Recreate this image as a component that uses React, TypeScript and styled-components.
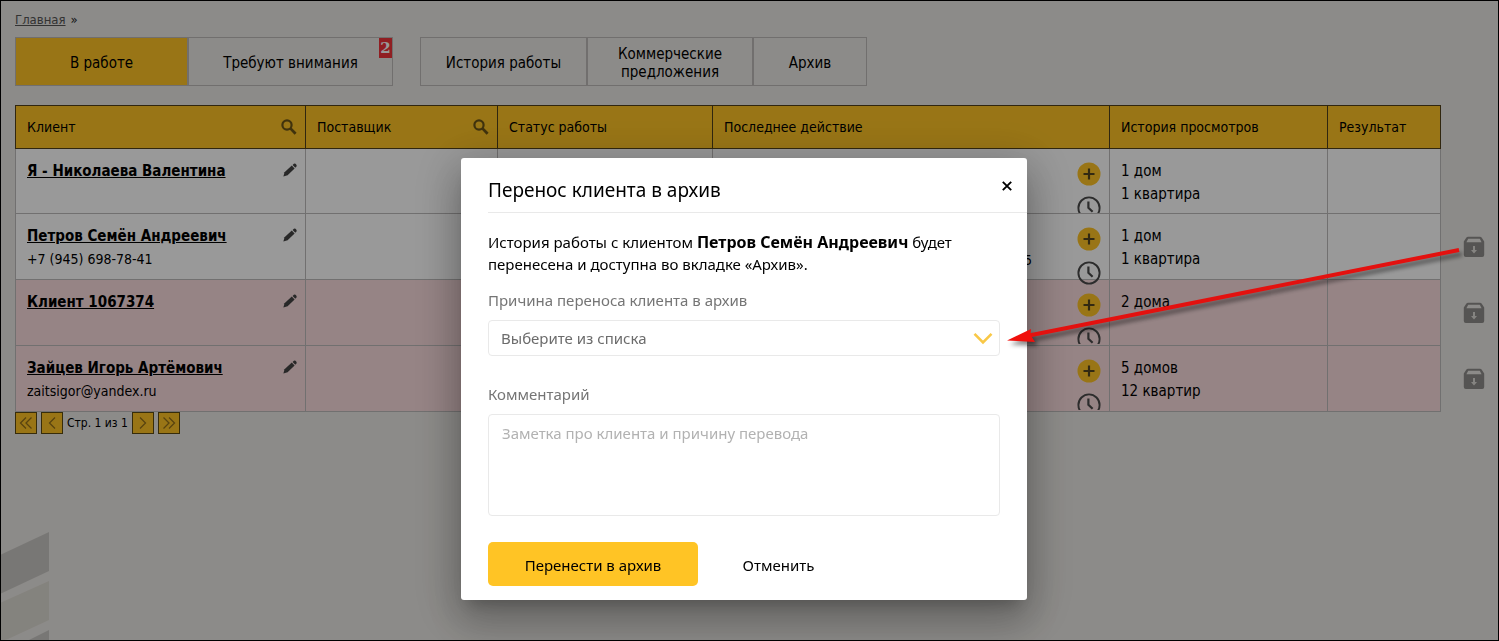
import React from "react";
import styled, { createGlobalStyle, css } from "styled-components";

const uiFont = `"DejaVu Sans Condensed", Tahoma, Verdana, sans-serif`;
const dialogFont = `"Noto Sans", Tahoma, sans-serif`;

const GlobalStyle = createGlobalStyle`
  *, *::before, *::after { box-sizing: border-box; }
  body { margin: 0; font-family: ${uiFont}; font-size: 15px; line-height: 18px; color: #000; }
  button, select, textarea { font: inherit; color: inherit; margin: 0; }
  h1, p { margin: 0; }
`;

const Page = styled.main`
  position: relative;
  min-height: 100vh;
  padding: 9px 0 0 15px;
  background: #eae8e4;
  overflow: hidden;
`;

const Frame = styled.div`
  position: fixed;
  inset: 0;
  border: 1px solid #000;
  pointer-events: none;
  z-index: 3;
`;

const Breadcrumbs = styled.nav`
  display: flex;
  gap: 5px;
  padding-top: 2px;
  font-size: 13px;
  line-height: 18px;
  color: #222;
  a { color: #555; }
`;

const Tabs = styled.nav`
  display: flex;
  gap: 27px;
  padding: 8px 0 19px;
`;

const TabGroup = styled.div`
  display: flex;
  border: 1px solid #bcbab7;
`;

const Tab = styled.button<{ $width: number; $active?: boolean }>`
  position: relative;
  width: ${(p) => p.$width}px;
  height: 47px;
  padding: 2px 16px 0;
  border: 0;
  background: ${(p) => (p.$active ? "#ffc425" : "transparent")};
  & + & { border-left: 2px solid #bcbab7; }
`;

const Badge = styled.span`
  position: absolute;
  top: 0;
  right: 0;
  width: 13px;
  height: 20px;
  background: #f0333a;
  color: #fff;
  font-family: "DejaVu Serif", serif;
  font-weight: 700;
  line-height: 20px;
`;

const Table = styled.table`
  width: 100%;
  table-layout: fixed;
  border-collapse: collapse;
`;

const HeadCell = styled.th<{ $width: number }>`
  width: ${(p) => p.$width}px;
  height: 43px;
  padding: 0 8px 0 11px;
  border: 1px solid #50401a;
  background: #ffc425;
  font-size: 14px;
  font-weight: 400;
  text-align: left;
`;

const HeadContent = styled.div`
  display: flex;
  align-items: center;
  justify-content: space-between;
`;

const ActionHead = styled.th`
  width: auto;
`;

const Cell = styled.td`
  padding: 0 8px 0 11px;
  border: 1px solid #bdbbbb;
  vertical-align: top;
`;

const ActionCell = styled.td`
  padding: 6px 0 0 8px;
  text-align: center;
  vertical-align: middle;
`;

const Row = styled.tr<{ $alert?: boolean }>`
  height: 66px;
  &:first-child { height: 65px; }
  ${Cell} { background: ${(p) => (p.$alert ? "#fadcde" : "#fff")}; }
`;

const ClientBox = styled.div`
  display: flex;
  justify-content: space-between;
  padding-top: 11px;
  line-height: 23px;
`;

const ClientLink = styled.a`
  display: block;
  color: #000;
  font-weight: 700;
`;

const Contact = styled.div`
  font-size: 14px;
`;

const IconButton = styled.button`
  display: inline-flex;
  align-items: center;
  justify-content: center;
  flex: none;
  height: 20px;
  padding: 0;
  border: 0;
  background: none;
`;

const LastAction = styled.div<{ $filled: boolean }>`
  display: flex;
  justify-content: flex-end;
  gap: 45px;
  height: 64px;
  overflow: ${(p) => (p.$filled ? "visible" : "hidden")};
`;

const ActionText = styled.div`
  padding-top: 37px;
  font-size: 14px;
`;

const Stack = styled.div`
  display: flex;
  flex-direction: column;
  gap: 10px;
  padding-top: 13px;
  ${IconButton} { height: 24px; }
`;

const Views = styled.div`
  padding-top: 11px;
  line-height: 23px;
`;

const Pager = styled.nav`
  display: flex;
  align-items: center;
  gap: 4px;
  font-size: 12px;
`;

const PageButton = styled.button`
  display: flex;
  align-items: center;
  justify-content: center;
  width: 22px;
  height: 22px;
  padding: 0;
  border: 1px solid #5c4a12;
  background: #ffc425;
`;

const Stripes = styled.svg`
  position: absolute;
  left: 0;
  bottom: 0;
`;

const Backdrop = styled.div`
  position: fixed;
  inset: 0;
  z-index: 1;
  display: flex;
  align-items: flex-start;
  justify-content: center;
  padding: 158px 11px 0 0;
  background: rgba(0, 0, 0, 0.4);
  font-family: ${dialogFont};
`;

const Dialog = styled.form`
  position: relative;
  width: 566px;
  padding: 16px 27px 14px;
  border-radius: 3px;
  background: #fff;
  box-shadow: 0 11px 15px -7px rgba(0, 0, 0, 0.2), 0 24px 38px 3px rgba(0, 0, 0, 0.14),
    0 9px 46px 8px rgba(0, 0, 0, 0.2);
`;

const DialogHead = styled.header`
  display: flex;
  justify-content: space-between;
  margin-right: -27px;
  padding-right: 14px;
  height: 39px;
  border-bottom: 1px solid #e9e9e9;
`;

const Title = styled.h1`
  font-size: 19px;
  font-weight: 400;
  line-height: 32px;
`;

const CloseButton = styled(IconButton)`
  height: 24px;
`;

const Message = styled.p`
  padding: 18px 0 15px;
  line-height: 22px;
  b { font-size: 16px; }
`;

const Label = styled.label`
  display: block;
  height: 30px;
  line-height: 20px;
  color: #757575;
`;

const fieldStyle = css`
  display: block;
  width: 100%;
  border: 1px solid #e9e9e9;
  border-radius: 4px;
  background: #fff;
  outline: 0;
`;

const SelectBox = styled.div`
  position: relative;
  padding-bottom: 28px;
  svg { position: absolute; top: 12px; right: 7px; pointer-events: none; }
`;

const Select = styled.select`
  ${fieldStyle}
  height: 36px;
  padding: 0 12px;
  appearance: none;
  color: #6c6c6c;
`;

const TextArea = styled.textarea`
  ${fieldStyle}
  height: 102px;
  padding: 8px 13px;
  line-height: 20px;
  resize: none;
  &::placeholder { color: #b2b2b2; opacity: 1; }
`;

const Actions = styled.footer`
  display: flex;
  gap: 16px;
  padding-top: 26px;
`;

const DialogButton = styled.button<{ $primary?: boolean }>`
  width: ${(p) => (p.$primary ? 210 : 129)}px;
  height: 44px;
  padding: 2px 0 0;
  border: 0;
  border-radius: 5px;
  background: ${(p) => (p.$primary ? "#ffc425" : "none")};
`;

const Pointer = styled.svg`
  position: absolute;
  left: 540px;
  top: 80px;
  overflow: visible;
  pointer-events: none;
  filter: drop-shadow(3px 4px 2px rgba(0, 0, 0, 0.45));
`;

const SearchIcon = () => (
  <svg width="16" height="16" viewBox="0 0 16 16" fill="none" stroke="#6b5416">
    <circle cx="6" cy="6" r="4.6" strokeWidth="2.2" />
    <path d="M9.4 9.4 14.6 14.8" strokeWidth="2.8" />
  </svg>
);

const PencilIcon = () => (
  <svg width="14" height="14" viewBox="0 0 14 14" fill="#444">
    <path d="M.4 13.6 1.5 9.3 8.8 2.6 11.6 5.6 4.6 12.3Z" />
    <path d="M9.6 1.9 10.9.7Q11.7.1 12.5.8L13.4 1.8Q14 2.6 13.4 3.4L12.3 4.8Z" />
  </svg>
);

const PlusIcon = () => (
  <svg width="24" height="24" viewBox="0 0 24 24">
    <circle cx="12" cy="12" r="11.5" fill="#ffc425" />
    <path d="M12 6.500v11M6.500 12h11" stroke="#54451f" strokeWidth="2.2" />
  </svg>
);

const ClockIcon = () => (
  <svg width="24" height="24" viewBox="0 0 24 24" fill="none" stroke="#4a4a4a">
    <circle cx="12" cy="12" r="10.6" strokeWidth="1.9" />
    <path d="M11.4 5.5v6.2l4.2 4" strokeWidth="2.2" />
  </svg>
);

const ArchiveIcon = () => (
  <svg width="22" height="22" viewBox="0 0 22 22">
    <path
      fill="#8e8c8a"
      fillRule="evenodd"
      d="M5 .8h12Q18 .8 18.600 1.600L21.200 5.500V19q0 2-2 2H2.800q-2 0-2-2V5.500L3.400 1.600Q4 .8 5 .8ZM5.200 2.800 3.400 6.200h15.200L16.800 2.800Z"
    />
    <path fill="#dedcd8" d="M10 10h2v4h2L11 17.600 8 14H10Z" />
  </svg>
);

const CloseIcon = () => (
  <svg width="12" height="12" viewBox="0 0 12 12" stroke="#000" strokeWidth="1.9">
    <path d="M1.800 1.800 10.200 10.200M10.200 1.800 1.800 10.200" />
  </svg>
);

const ChevronDown = () => (
  <svg width="20" height="13" viewBox="0 0 20 13" fill="none" stroke="#f9c846" strokeWidth="2.600">
    <path d="M1.500 1.800 10 10.500 18.500 1.800" />
  </svg>
);

const Chevrons = ({ double, back }: { double?: boolean; back?: boolean }) => (
  <svg width="16" height="14" viewBox="0 0 16 14" fill="none" stroke="#94701a" strokeWidth="1.300">
    <g transform={back ? "translate(16 0) scale(-1 1)" : undefined}>
      {double ? <path d="M2.500 1.500 8 7 2.500 12.500M8 1.500 13.500 7 8 12.500" /> : <path d="M5 1.500 10.500 7 5 12.500" />}
    </g>
  </svg>
);

type Client = { name: string; contact?: string; views: string[]; action?: string; alert?: boolean; archivable?: boolean };

const clients: Client[] = [
  { name: "Я - Николаева Валентина", views: ["1 дом", "1 квартира"] },
  { name: "Петров Семён Андреевич", contact: "+7 (945) 698-78-41", views: ["1 дом", "1 квартира"], action: "5", archivable: true },
  { name: "Клиент 1067374", views: ["2 дома"], alert: true, archivable: true },
  { name: "Зайцев Игорь Артёмович", contact: "zaitsigor@yandex.ru", views: ["5 домов", "12 квартир"], alert: true, archivable: true },
];

const columns = [
  { title: "Клиент", width: 290, search: true },
  { title: "Поставщик", width: 192, search: true },
  { title: "Статус работы", width: 215 },
  { title: "Последнее действие", width: 397 },
  { title: "История просмотров", width: 218 },
  { title: "Результат", width: 113 },
];

export default function App() {
  return (
    <>
      <GlobalStyle />
      <Page>
        <Breadcrumbs>
          <a href="#home">Главная</a>
          <span>»</span>
        </Breadcrumbs>
        <Tabs>
          <TabGroup>
            <Tab type="button" $width={171} $active>В работе</Tab>
            <Tab type="button" $width={205}>
              Требуют внимания
              <Badge>2</Badge>
            </Tab>
          </TabGroup>
          <TabGroup>
            <Tab type="button" $width={165}>История работы</Tab>
            <Tab type="button" $width={166}>Коммерческие предложения</Tab>
            <Tab type="button" $width={114}>Архив</Tab>
          </TabGroup>
        </Tabs>
        <Table>
          <thead>
            <tr>
              {columns.map((c) => (
                <HeadCell key={c.title} $width={c.width}>
                  <HeadContent>
                    {c.title}
                    {c.search && (
                      <IconButton type="button" aria-label={`Поиск: ${c.title}`}>
                        <SearchIcon />
                      </IconButton>
                    )}
                  </HeadContent>
                </HeadCell>
              ))}
              <ActionHead />
            </tr>
          </thead>
          <tbody>
            {clients.map((c) => (
              <Row key={c.name} $alert={c.alert}>
                <Cell>
                  <ClientBox>
                    <div>
                      <ClientLink href="#client">{c.name}</ClientLink>
                      {c.contact && <Contact>{c.contact}</Contact>}
                    </div>
                    <IconButton type="button" aria-label="Редактировать">
                      <PencilIcon />
                    </IconButton>
                  </ClientBox>
                </Cell>
                <Cell />
                <Cell />
                <Cell>
                  <LastAction $filled={Boolean(c.action)}>
                    {c.action && <ActionText>{c.action}</ActionText>}
                    <Stack>
                      <IconButton type="button" aria-label="Добавить действие"><PlusIcon /></IconButton>
                      <IconButton type="button" aria-label="История действий"><ClockIcon /></IconButton>
                    </Stack>
                  </LastAction>
                </Cell>
                <Cell>
                  <Views>
                    {c.views.map((v) => <div key={v}>{v}</div>)}
                  </Views>
                </Cell>
                <Cell />
                <ActionCell>
                  {c.archivable && (
                    <IconButton type="button" aria-label="В архив"><ArchiveIcon /></IconButton>
                  )}
                </ActionCell>
              </Row>
            ))}
          </tbody>
        </Table>
        <Pager>
          <PageButton type="button" aria-label="Первая"><Chevrons double back /></PageButton>
          <PageButton type="button" aria-label="Назад"><Chevrons back /></PageButton>
          <span>Стр. 1 из 1</span>
          <PageButton type="button" aria-label="Вперёд"><Chevrons /></PageButton>
          <PageButton type="button" aria-label="Последняя"><Chevrons double /></PageButton>
        </Pager>
        <Stripes width="49" height="109" viewBox="0 0 49 109">
          <path fill="#c9c7c4" d="M0 23 49 0v39L0 62Z" />
          <path fill="#dddad2" d="M0 71 49 49v39L8 107 0 109Z" />
          <path fill="#c9c7c4" d="M27 109 49 98v11Z" />
        </Stripes>
      </Page>
      <Backdrop>
        <Dialog role="dialog" aria-labelledby="dialog-title" onSubmit={(e) => e.preventDefault()}>
          <DialogHead>
            <Title id="dialog-title">Перенос клиента в архив</Title>
            <CloseButton type="button" aria-label="Закрыть"><CloseIcon /></CloseButton>
          </DialogHead>
          <Message>
            История работы с клиентом <b>Петров Семён Андреевич</b> будет перенесена и доступна во вкладке «Архив».
          </Message>
          <Label htmlFor="reason">Причина переноса клиента в архив</Label>
          <SelectBox>
            <Select id="reason" defaultValue="">
              <option value="">Выберите из списка</option>
            </Select>
            <ChevronDown />
          </SelectBox>
          <Label htmlFor="comment">Комментарий</Label>
          <TextArea id="comment" placeholder="Заметка про клиента и причину перевода" />
          <Actions>
            <DialogButton type="submit" $primary>Перенести в архив</DialogButton>
            <DialogButton type="button">Отменить</DialogButton>
          </Actions>
          <Pointer width="460" height="110" viewBox="0 0 460 110">
            <path d="M458 12 28 97.500" stroke="#e3110f" strokeWidth="4" />
            <path d="M6 102.500 30 91 29.500 97 34 104Z" fill="#f0100c" />
          </Pointer>
        </Dialog>
      </Backdrop>
      <Frame />
    </>
  );
}
